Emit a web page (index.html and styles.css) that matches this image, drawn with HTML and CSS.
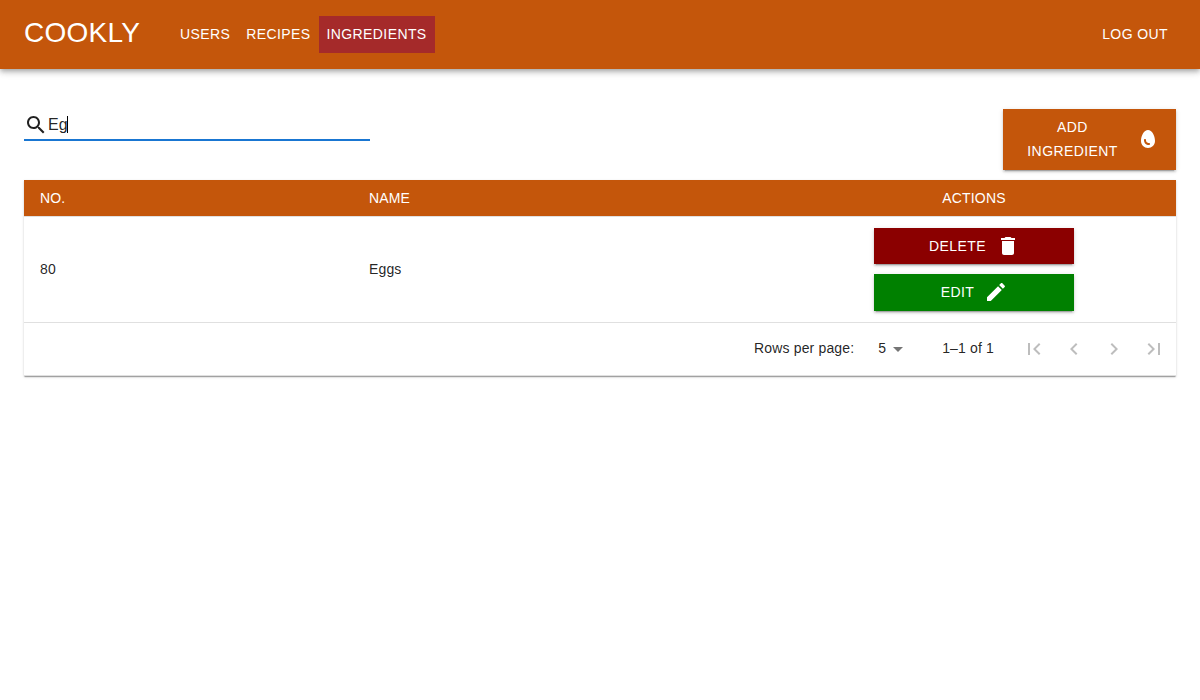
FILE: index.html
```html
<!DOCTYPE html>
<html lang="en">
<head>
<meta charset="utf-8">
<title>Cookly</title>
<link rel="stylesheet" href="styles.css">
</head>
<body>
<header class="appbar">
  <div class="brand">COOKLY</div>
  <nav class="nav">
    <a class="nav-link">USERS</a>
    <a class="nav-link">RECIPES</a>
    <a class="nav-link active">INGREDIENTS</a>
  </nav>
  <a class="nav-link">LOG OUT</a>
</header>
<main class="content">
  <div class="toolbar">
    <div class="search">
      <svg class="icon" viewBox="0 0 24 24"><path d="M15.5 14h-.79l-.28-.27C15.41 12.59 16 11.11 16 9.5 16 5.91 13.09 3 9.5 3S3 5.91 3 9.5 5.91 16 9.5 16c1.61 0 3.09-.59 4.23-1.57l.27.28v.79l5 4.99L20.49 19l-4.99-5zm-6 0C7.01 14 5 11.99 5 9.5S7.01 5 9.5 5 14 7.01 14 9.5 11.99 14 9.5 14z"/></svg>
      <span class="query">Eg</span><span class="caret"></span>
    </div>
    <div class="btn add">
      <span class="add-label">ADD INGREDIENT</span>
      <svg class="icon" viewBox="0 0 24 24"><path d="M12 3C8 3 5 8.6 5 14c0 3.87 3.13 7 7 7s7-3.13 7-7c0-5.4-3-11-7-11zm1 15c-3 0-5-1.99-5-5 0-.55.45-1 1-1s1 .45 1 1c0 2.92 2.42 3 3 3 .55 0 1 .45 1 1s-.45 1-1 1z"/></svg>
    </div>
  </div>
  <section class="table">
    <div class="row head">
      <div class="cell">NO.</div>
      <div class="cell">NAME</div>
      <div class="cell center">ACTIONS</div>
    </div>
    <div class="row body">
      <div class="cell text">80</div>
      <div class="cell text">Eggs</div>
      <div class="cell actions">
        <div class="btn delete">DELETE
          <svg class="icon" viewBox="0 0 24 24"><path d="M6 19c0 1.1.9 2 2 2h8c1.1 0 2-.9 2-2V7H6v12zM19 4h-3.5l-1-1h-5l-1 1H5v2h14V4z"/></svg>
        </div>
        <div class="btn edit">EDIT
          <svg class="icon" viewBox="0 0 24 24"><path d="M3 17.25V21h3.75L17.81 9.94l-3.75-3.75L3 17.25zM20.71 7.04c.39-.39.39-1.02 0-1.41l-2.34-2.34c-.39-.39-1.02-.39-1.41 0l-1.83 1.83 3.75 3.75 1.83-1.83z"/></svg>
        </div>
      </div>
    </div>
    <div class="pagination">
      <span class="text">Rows per page:</span>
      <span class="text rows-select">5</span>
      <svg class="icon arrow" viewBox="0 0 24 24"><path d="M7 10l5 5 5-5z"/></svg>
      <span class="text range">1–1 of 1</span>
      <div class="pager">
        <svg class="icon" viewBox="0 0 24 24"><path d="M18.41 16.59L13.82 12l4.59-4.59L17 6l-6 6 6 6zM6 6h2v12H6z"/></svg>
        <svg class="icon" viewBox="0 0 24 24"><path d="M15.41 16.59L10.83 12l4.58-4.59L14 6l-6 6 6 6z"/></svg>
        <svg class="icon" viewBox="0 0 24 24"><path d="M8.59 16.59L13.17 12 8.59 7.41 10 6l6 6-6 6z"/></svg>
        <svg class="icon" viewBox="0 0 24 24"><path d="M5.59 7.41L10.18 12l-4.59 4.59L7 18l6-6-6-6zM16 6h2v12h-2z"/></svg>
      </div>
    </div>
  </section>
</main>
</body>
</html>
```
FILE: styles.css
```css
* { box-sizing: border-box; }
body {
  margin: 0;
  min-height: 100vh;
  background: #fff;
  color: rgba(0, 0, 0, .87);
  font: 14px/20px "Liberation Sans", Arial, sans-serif;
  letter-spacing: .15px;
}
.icon { width: 24px; height: 24px; flex: none; fill: currentColor; display: block; }
.appbar {
  height: 69px;
  padding: 0 24px;
  display: flex;
  align-items: center;
  background: #c4560b;
  color: #fff;
  box-shadow: 0 2px 4px -1px rgba(0,0,0,.2), 0 4px 5px rgba(0,0,0,.14), 0 1px 10px rgba(0,0,0,.12);
}
.brand { width: 148px; font-size: 28px; line-height: 36px; letter-spacing: .25px; padding-bottom: 3px; }
.nav { display: flex; flex: 1; }
.nav-link { padding: 6px 8px; line-height: 24.5px; letter-spacing: .4px; }
.active { background: #a52a2a; }
.content { padding: 40px 24px 0; }
.toolbar { display: flex; justify-content: space-between; align-items: flex-start; height: 71px; }
.search {
  width: 346px;
  height: 32px;
  display: flex;
  align-items: center;
  padding-top: 1px;
  border-bottom: 2px solid #1976d2;
  font-size: 16px;
}
.caret { width: 1px; height: 17px; margin-left: -1px; background: #000; }
.btn {
  display: flex;
  align-items: center;
  justify-content: center;
  gap: 10px;
  height: 36px;
  padding: 6px 16px;
  line-height: 24px;
  letter-spacing: .4px;
  color: #fff;
  box-shadow: 0 3px 1px -2px rgba(0,0,0,.2), 0 2px 2px rgba(0,0,0,.14), 0 1px 5px rgba(0,0,0,.12);
}
.add { width: 173px; height: 61px; padding-bottom: 7px; background: #c4560b; }
.add-label { flex: 1; text-align: center; }
.table { box-shadow: 0 2px 1px -1px rgba(0,0,0,.2), 0 1px 1px rgba(0,0,0,.14), 0 1px 3px rgba(0,0,0,.12); }
.row { display: grid; grid-template-columns: 329px 419px 404px; align-items: center; border-bottom: 1px solid #e0e0e0; }
.cell { padding: 0 16px; }
.text { padding-bottom: 2px; }
.head { height: 37px; background: #c4560b; background-clip: padding-box; color: #fff; }
.center { text-align: center; }
.body { height: 106px; }
.actions { display: flex; flex-direction: column; align-items: center; gap: 10px; }
.actions .btn { width: 200px; padding-left: 17px; }
.delete { background: #8b0000; }
.actions .edit { height: 37px; padding-bottom: 7px; background: #008000; }
.pagination {
  height: 53px;
  padding-right: 2px;
  display: flex;
  align-items: center;
  justify-content: flex-end;
  border-bottom: 1px solid #e0e0e0;
}
.rows-select { margin-left: 24px; }
.arrow { color: rgba(0,0,0,.54); }
.range { margin-left: 32px; }
.pager { display: flex; gap: 16px; margin-left: 28px; padding-right: 8px; color: rgba(0,0,0,.26); }
```
